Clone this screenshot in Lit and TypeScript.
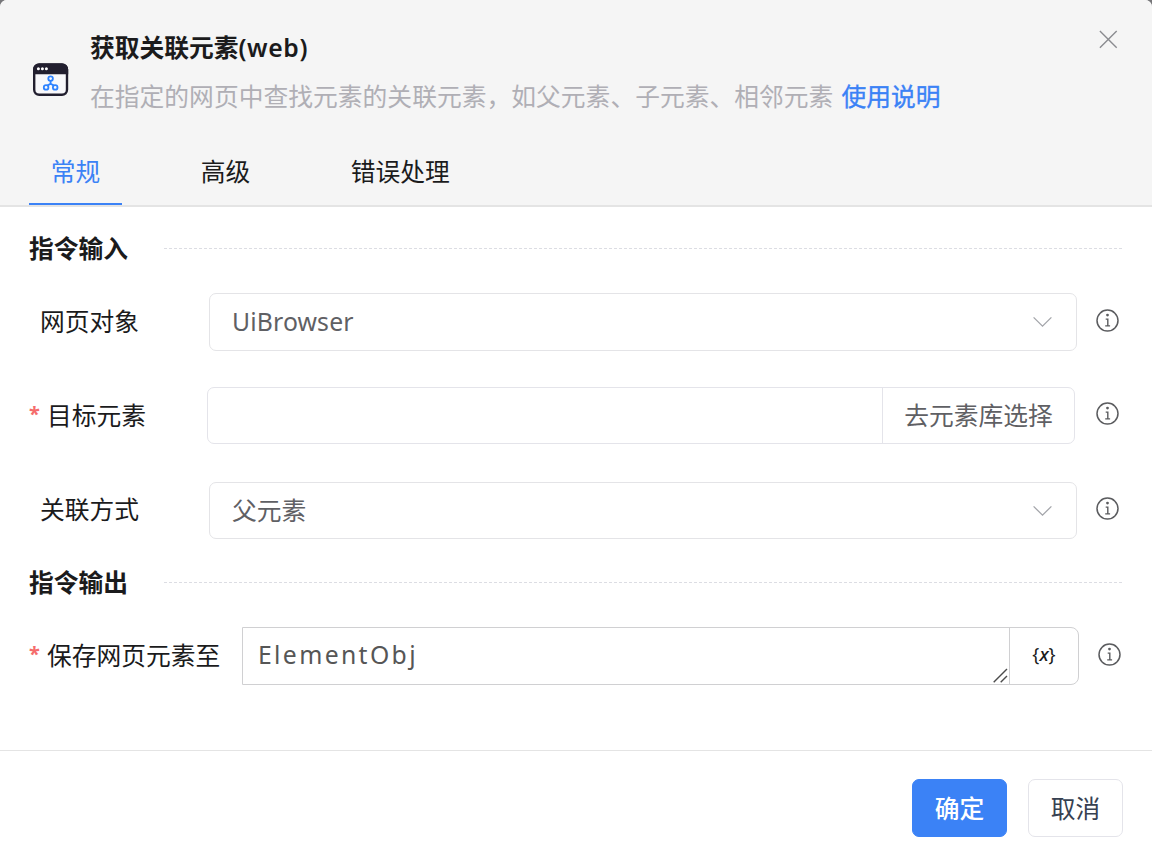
import { LitElement, html, css, svg } from "lit";
import { customElement, property, state } from "lit/decorators.js";
import { classMap } from "lit/directives/class-map.js";

@customElement("info-icon")
class InfoIcon extends LitElement {
  static styles = css`
    :host { display: block; width: 24px; height: 24px; }
    svg { display: block; }
  `;
  render() {
    return html`<svg width="24" height="24" viewBox="0 0 24 24" fill="none" stroke="#5b5c5f">
      <circle cx="12.5" cy="11.6" r="10.5" stroke-width="1.5" />
      <circle cx="12.5" cy="6.1" r="1.4" fill="#5b5c5f" stroke="none" />
      <path d="M10.7 10.1h2.1v6.9M10.2 16.9h4.9" stroke-width="1.4" />
    </svg>`;
  }
}

@customElement("section-title")
class SectionTitle extends LitElement {
  @property() label = "";
  static styles = css`
    :host { display: flex; align-items: center; padding: 0 29px; }
    .label { width: 135px; font-weight: 700; white-space: nowrap; }
    .rule { flex: 1; height: 1px; background: repeating-linear-gradient(90deg, #dcdde3 0 3px, transparent 3px 5px); }
  `;
  render() {
    return html`<div class="label">${this.label}</div><div class="rule"></div>`;
  }
}

@customElement("select-box")
class SelectBox extends LitElement {
  @property() value = "";
  static styles = css`
    :host {
      display: flex; align-items: center; justify-content: space-between;
      box-sizing: border-box; border: 1px solid #e4e4e7; border-radius: 7px;
      padding: 0 23px 0 22px; color: #5f6064; letter-spacing: var(--track, 0);
    }
    svg { display: block; }
  `;
  render() {
    return html`<span>${this.value}</span>
      <svg width="20" height="12" viewBox="0 0 20 12" fill="none" stroke="#a3a5aa" stroke-width="1.3">
        <path d="M0.6 1.4 9.5 10.2 18.4 1.4" />
      </svg>`;
  }
}

@customElement("app-root")
class AppRoot extends LitElement {
  @state() private active = 0;
  private tabs = ["常规", "高级", "错误处理"];

  static styles = css`
    :host {
      display: block; height: 866px; background: #77777a; overflow: hidden;
      font-family: "Noto Sans", "Noto Sans CJK SC", sans-serif;
      font-size: 24.75px; line-height: 36px; color: #1b1b1c;
    }
    .dialog {
      display: flex; flex-direction: column; height: 866px; box-sizing: border-box;
      background: #fff; border-radius: 7px 7px 0 0; overflow: hidden;
    }
    .header {
      height: 207px; box-sizing: border-box; background: #f5f5f5;
      border-bottom: 2px solid #e4e4e4; display: flex; flex-direction: column;
    }
    .head { display: flex; height: 137px; padding: 0 33px; }
    .logo { margin: 63px 21px 0 0; width: 36px; height: 34px; }
    .titles { flex: 1; padding-top: 30px; }
    .title { font-weight: 700; height: 36px; }
    .title span { font-weight: 600; letter-spacing: 0.6px; }
    .desc { margin-top: 13px; color: #b0afb5; white-space: nowrap; letter-spacing: 0.03px; }
    .desc a { color: #3b82f6; -webkit-text-stroke: 0.35px #3b82f6; margin-left: 8px; }
    .close { margin-top: 29px; width: 21px; height: 20px; }
    .tabs { display: flex; gap: 57px; height: 68px; padding-left: 29px; }
    .tab {
      box-sizing: border-box; height: 68px; padding: 17px 21.75px 0;
      border-bottom: 2px solid transparent; white-space: nowrap;
    }
    .tab.active { color: #3b82f6; border-color: #3b82f6; }
    .first { height: 83px; margin-bottom: 3px; }
    .second { height: 87px; margin-bottom: 1px; }
    .row { display: flex; align-items: center; }
    .r1 { height: 58px; margin-bottom: 36px; --track: 0.15px; }
    .r2 { height: 57px; margin-bottom: 38px; }
    .r3 { height: 57px; }
    .r4 { height: 58px; }
    .name { box-sizing: border-box; width: 209px; padding-left: 40px; white-space: nowrap; }
    .r3 .name { padding-bottom: 2px; }
    .name.req { display: flex; gap: 7px; width: 207px; padding-left: 29px; }
    .r4 .name.req { width: 242px; padding-bottom: 1px; }
    .star { color: #f56c6c; width: 11px; font-size: 20px; font-weight: 700; line-height: 31px; }
    select-box { width: 868px; height: 100%; }
    info-icon { margin-left: 18px; margin-bottom: 2px; }
    .r2 info-icon { margin-left: 20px; margin-bottom: 3px; }
    .r3 info-icon { margin-bottom: 3px; }
    .group {
      display: flex; box-sizing: border-box; width: 868px; height: 100%;
      border: 1px solid #e4e4ea; border-radius: 7px;
    }
    .input { flex: 1; }
    .pick {
      box-sizing: border-box; width: 192px; border-left: 1px solid #e4e4ea;
      display: flex; align-items: center; justify-content: center; color: #5f6064;
    }
    .out {
      display: flex; box-sizing: border-box; width: 837px; height: 100%;
      border: 1px solid #d0d0d2; border-radius: 0 8px 8px 0;
    }
    .area {
      flex: 1; display: flex; justify-content: space-between; align-items: center;
      padding: 0 1px 0 15px; color: #565656; letter-spacing: 2.35px;
    }
    .area span { padding-bottom: 2px; }
    .grip { align-self: flex-end; margin-bottom: 1px; }
    .var {
      box-sizing: border-box; width: 69px; border-left: 1px solid #d0d0d2; font-size: 18.5px;
      display: flex; align-items: center; justify-content: center; padding-bottom: 4px;
    }
    .var i { font-weight: 500; }
    .footer {
      margin-top: 65px; flex: 1; border-top: 1px solid #e4e4e4; display: flex;
      justify-content: flex-end; gap: 21px; padding: 28px 29px 0 0;
    }
    .btn {
      box-sizing: border-box; width: 95px; height: 58px; border-radius: 7px; border: 1px solid #e4e4ea;
      display: flex; align-items: center; justify-content: center; color: #374151; padding-top: 1px;
    }
    .primary { background: #3b82f6; border-color: #3b82f6; color: #fff; font-weight: 500; }
    svg { display: block; }
  `;

  private logo() {
    return svg`
      <svg width="36" height="34" viewBox="0 0 36 34" fill="none">
        <rect x="1.2" y="1.4" width="32.8" height="30.4" rx="5" fill="#f8f8fb" stroke="#221f2f" stroke-width="2.4" />
        <path d="M0 11.2V6.4a6 6 0 0 1 6-6h23.200a6 6 0 0 1 6 6v4.8z" fill="#221f2f" />
        <g fill="#fff"><circle cx="5.4" cy="5.8" r="1.5" /><circle cx="9.4" cy="5.8" r="1.5" /><circle cx="13.4" cy="5.8" r="1.5" /></g>
        <g stroke="#2f83ff" stroke-width="1.8">
          <circle cx="17.6" cy="15.6" r="2.3" /><circle cx="13.1" cy="24.4" r="2.3" /><circle cx="22.2" cy="24.4" r="2.3" />
          <path d="M17.6 18v3M14.3 22.6l3.3-1.9 3.4 1.9" />
        </g>
      </svg>`;
  }

  render() {
    return html`
      <div class="dialog">
        <div class="header">
          <div class="head">
            <div class="logo">${this.logo()}</div>
            <div class="titles">
              <div class="title">获取关联元素<span>(web)</span></div>
              <div class="desc">在指定的网页中查找元素的关联元素，如父元素、子元素、相邻元素<a>使用说明</a></div>
            </div>
            <div class="close">
              <svg width="20" height="20" viewBox="0 0 20 20" stroke="#8b8c90" stroke-width="1.4">
                <path d="M1.900 1.900 18.700 18.700M18.700 1.900 1.900 18.700" />
              </svg>
            </div>
          </div>
          <div class="tabs">
            ${this.tabs.map((t, i) => html`<div
              class=${classMap({ tab: true, active: i === this.active })}
              @click=${() => (this.active = i)}>${t}</div>`)}
          </div>
        </div>
        <section-title class="first" label="指令输入"></section-title>
        <div class="row r1">
          <div class="name">网页对象</div>
          <select-box value="UiBrowser"></select-box>
          <info-icon></info-icon>
        </div>
        <div class="row r2">
          <div class="name req"><span class="star">*</span><span>目标元素</span></div>
          <div class="group"><div class="input"></div><div class="pick">去元素库选择</div></div>
          <info-icon></info-icon>
        </div>
        <div class="row r3">
          <div class="name">关联方式</div>
          <select-box value="父元素"></select-box>
          <info-icon></info-icon>
        </div>
        <section-title class="second" label="指令输出"></section-title>
        <div class="row r4">
          <div class="name req"><span class="star">*</span><span>保存网页元素至</span></div>
          <div class="out">
            <div class="area"><span>ElementObj</span>
              <svg class="grip" width="15" height="15" viewBox="0 0 15 15" stroke="#4c4c4c" stroke-width="1.4">
                <path d="M0.7 14.2 14 0.9M7.7 14.2 14 7.9" />
              </svg>
            </div>
            <div class="var"><span>{<i>x</i>}</span></div>
          </div>
          <info-icon></info-icon>
        </div>
        <div class="footer">
          <div class="btn primary">确定</div>
          <div class="btn">取消</div>
        </div>
      </div>
    `;
  }
}
